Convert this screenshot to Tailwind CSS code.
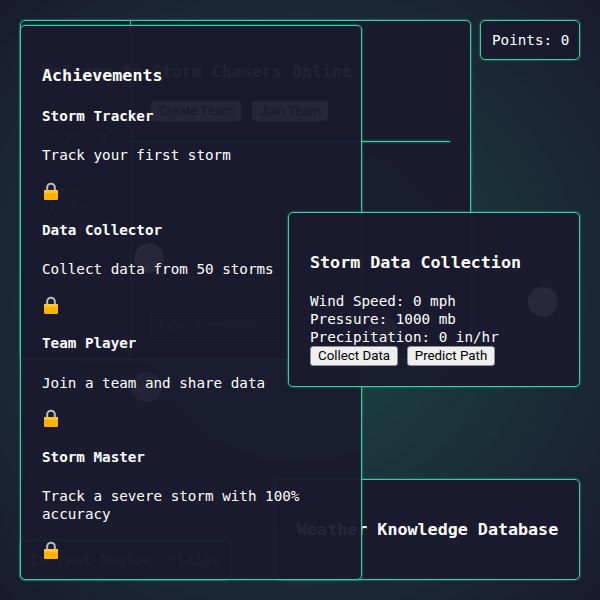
<!DOCTYPE html>
<html lang="en">
<head>
  <meta charset="UTF-8" />
  <title>Storm Chasers Online</title>
  <script src="https://cdn.jsdelivr.net/npm/@tailwindcss/browser@4"></script>
</head>
<body class="bg-[#1a1a2e]">
  <div class="relative w-[600px] h-[600px] overflow-hidden bg-[radial-gradient(circle,#1b4844,#1a1a2e)] font-['DejaVu_Sans_Mono',monospace] text-[14.25px] leading-[18px] text-white">

    <!-- Team panel, sits under everything -->
    <div class="absolute left-[20px] top-[20px] w-[451px] h-[340px] flex bg-[#1a1a2e]/95 border border-[#2dd4a0] shadow-[0_0_2px_#2dc79b] rounded-[5px]">
      <div class="w-[110px] h-full border-r border-[#2dd4a0] pl-[21px] pt-[40px]">
        <h1 class="text-[16.6px] leading-[21px] font-bold whitespace-nowrap text-white/70">Welcome to Storm Chasers Online</h1>
        <div class="text-[12px] leading-[16px] text-white/40">
          <p class="mt-[47px] ml-[8px]">Tracking</p>
          <p class="mt-[38px]">Storm Tracker</p>
          <p class="mt-[4px]">Live Feed</p>
          <p class="mt-[31px] ml-[10px]">Community</p>
        </div>
        <div class="mt-[60px] -ml-[19px] mr-[2px] border-t-2 border-dashed border-white/30"></div>
      </div>
      <div class="flex-1 pl-[20px] pr-[20px] pt-[80px]">
        <div class="flex gap-[11px]">
          <button class="w-[90px] h-[20px] bg-[#efefef] text-black font-['Roboto',sans-serif] text-[13.33px] rounded-[3px]">Create Team</button>
          <button class="w-[76px] h-[20px] bg-[#efefef] text-black font-['Roboto',sans-serif] text-[13.33px] rounded-[3px]">Join Team</button>
        </div>
        <div class="-ml-[20px] mt-[20px] h-px bg-[#2dd4a0] shadow-[0_0_2px_#2dc79b]"></div>
        <div class="mt-[171px] w-[140px] h-[25px] border border-white/30 pl-[6px] text-[12px] leading-[23px] text-white/50">Type a message</div>
      </div>
    </div>

    <!-- Region badge -->
    <div class="absolute left-[20px] top-[540px] w-[211px] h-[40px] flex items-center pl-[10px] bg-[#1a1a2e]/95 border border-[#2dd4a0] shadow-[0_0_2px_#2dc79b] rounded-[5px] whitespace-nowrap font-bold text-white/40">Current Region: Plains</div>

    <!-- Knowledge panel -->
    <div class="absolute left-[275px] top-[479px] w-[305px] h-[101px] flex items-center pl-[21px] bg-[#1a1a2e]/95 border border-[#2dd4a0] shadow-[0_0_2px_#2dc79b] rounded-[5px]">
      <h2 class="text-[16.7px] leading-[21px] font-bold whitespace-nowrap">Weather Knowledge Database</h2>
    </div>

    <!-- Points -->
    <div class="absolute left-[480px] top-[20px] w-[100px] h-[40px] flex items-center pl-[11px] bg-[#1a1a2e]/95 border border-[#2dd4a0] shadow-[0_0_2px_#2dc79b] rounded-[5px]">Points: 0</div>

    <!-- Achievements -->
    <div class="absolute left-[20px] top-[25px] w-[342px] h-[555px] bg-[#1a1a2e]/95 border border-[#2dd4a0] shadow-[0_0_2px_#2dc79b] rounded-[5px] pl-[21px] pr-[21px] pt-[39px]">
      <h2 class="text-[16.7px] leading-[21px] font-bold">Achievements</h2>
      <div class="mt-[21px]">
        <h3 class="font-bold">Storm Tracker</h3>
        <p class="mt-[21px]">Track your first storm</p>
        <svg class="mt-[18px] ml-[2px]" width="14" height="18" viewBox="0 0 14 18"><path d="M3.2 9V5.5a3.8 3.8 0 0 1 7.6 0V9" fill="none" stroke="#b9bcc2" stroke-width="2"/><rect x="0" y="8" width="14" height="10" rx="1.2" fill="#ffb300"/><rect x="0" y="8" width="14" height="3" rx="1" fill="#ffc933"/></svg>
      </div>
      <div class="mt-[21px]">
        <h3 class="font-bold">Data Collector</h3>
        <p class="mt-[21px]">Collect data from 50 storms</p>
        <svg class="mt-[18px] ml-[2px]" width="14" height="18" viewBox="0 0 14 18"><path d="M3.2 9V5.5a3.8 3.8 0 0 1 7.6 0V9" fill="none" stroke="#b9bcc2" stroke-width="2"/><rect x="0" y="8" width="14" height="10" rx="1.2" fill="#ffb300"/><rect x="0" y="8" width="14" height="3" rx="1" fill="#ffc933"/></svg>
      </div>
      <div class="mt-[20px]">
        <h3 class="font-bold">Team Player</h3>
        <p class="mt-[22px]">Join a team and share data</p>
        <svg class="mt-[17px] ml-[2px]" width="14" height="18" viewBox="0 0 14 18"><path d="M3.2 9V5.5a3.8 3.8 0 0 1 7.6 0V9" fill="none" stroke="#b9bcc2" stroke-width="2"/><rect x="0" y="8" width="14" height="10" rx="1.2" fill="#ffb300"/><rect x="0" y="8" width="14" height="3" rx="1" fill="#ffc933"/></svg>
      </div>
      <div class="mt-[21px]">
        <h3 class="font-bold">Storm Master</h3>
        <p class="mt-[21px]">Track a severe storm with 100% accuracy</p>
        <svg class="mt-[18px] ml-[2px]" width="14" height="18" viewBox="0 0 14 18"><path d="M3.2 9V5.5a3.8 3.8 0 0 1 7.6 0V9" fill="none" stroke="#b9bcc2" stroke-width="2"/><rect x="0" y="8" width="14" height="10" rx="1.2" fill="#ffb300"/><rect x="0" y="8" width="14" height="3" rx="1" fill="#ffc933"/></svg>
      </div>
    </div>

    <!-- Storm data -->
    <div class="absolute left-[288px] top-[212px] w-[292px] h-[175px] bg-[#1a1a2e]/95 border border-[#2dd4a0] shadow-[0_0_2px_#2dc79b] rounded-[5px] pl-[21px] pt-[39px]">
      <h2 class="text-[16.7px] leading-[21px] font-bold">Storm Data Collection</h2>
      <div class="mt-[19px]">
        <p>Wind Speed: 0 mph</p>
        <p>Pressure: 1000 mb</p>
        <p>Precipitation: 0 in/hr</p>
      </div>
      <div class="flex gap-[9px]">
        <button class="w-[88px] h-[20px] bg-[#efefef] border border-[#8f8f8f] text-black font-['Roboto',sans-serif] text-[13.33px] leading-[18px] rounded-[3px]">Collect Data</button>
        <button class="w-[88px] h-[20px] bg-[#efefef] border border-[#8f8f8f] text-black font-['Roboto',sans-serif] text-[13.33px] leading-[18px] rounded-[3px]">Predict Path</button>
      </div>
    </div>

    <!-- Storm markers drifting over the map -->
    <div class="absolute left-[134px] top-[243px] w-[30px] h-[30px] rounded-full bg-white/[0.06]"></div>
    <div class="absolute left-[132px] top-[372px] w-[30px] h-[30px] rounded-full bg-white/[0.04]"></div>
    <div class="absolute left-[528px] top-[287px] w-[30px] h-[30px] rounded-full bg-white/[0.06]"></div>
    <div class="absolute left-[368px] top-[317px] w-[30px] h-[30px] rounded-full bg-white/[0.03]"></div>
  </div>
</body>
</html>
